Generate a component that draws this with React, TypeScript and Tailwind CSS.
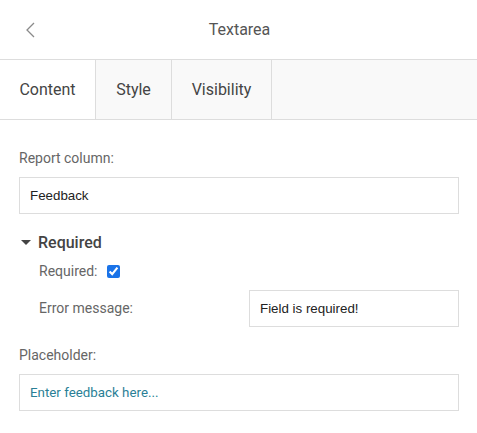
import { useState } from "react";

export default function App() {
  const [required, setRequired] = useState(true);
  const tabs = ["Content", "Style", "Visibility"];
  const tabWidths = ["w-[96px]", "w-[76px]", "w-[100px]"];

  return (
    <div className="w-[477px] h-[433px] bg-white font-['Roboto',sans-serif] text-[#444]">
      <header className="h-[59px] flex items-center relative">
        <button className="absolute left-[24px] top-[21px] text-[#888]">
          <svg width="14" height="18" viewBox="0 0 14 18" fill="none">
            <path d="M10 2 L3 9 L10 16" stroke="#8a8a8a" strokeWidth="1.3" />
          </svg>
        </button>
        <h1 className="w-full text-center text-[16px] text-[#555] pl-[2px]">Textarea</h1>
      </header>

      <nav className="flex h-[61px] border-y border-[#ddd] bg-[#f9f9f9]">
        {tabs.map((t, i) => (
          <div
            key={t}
            className={`${tabWidths[i]} flex items-center justify-center border-r border-[#ddd] text-[16px] text-[#444] ${
              i === 0 ? "bg-white" : ""
            }`}
          >
            {t}
          </div>
        ))}
      </nav>

      <div className="pl-[19px] pr-[18px] pt-[28px]">
        <label className="block text-[14px] text-[#666] leading-[20px]">Report column:</label>
        <div className="mt-[9px] h-[37px] border border-[#ddd] flex items-center px-[10px] text-[13.33px] text-[#222] font-['Liberation_Sans',sans-serif]">
          Feedback
        </div>

        <div className="mt-[18px] flex items-center gap-[7px] h-[22px]">
          <svg width="10" height="6" viewBox="0 0 10 6" className="ml-[2px]">
            <path d="M0 0 L10 0 L5 5 Z" fill="#444" />
          </svg>
          <span className="text-[16px] font-medium text-[#444]">Required</span>
        </div>

        <div className="pl-[20px]">
          <div className="mt-[7px] flex items-center h-[20px] text-[14px] text-[#666]">
            <span>Required:</span>
            <input
              type="checkbox"
              checked={required}
              onChange={(e) => setRequired(e.target.checked)}
              className="ml-[10px] w-[13px] h-[13px] accent-[#1a73e8]"
            />
          </div>

          <div className="mt-[9px] flex items-center justify-between">
            <span className="text-[14px] text-[#666]">Error message:</span>
            <div className="w-[210px] h-[37px] border border-[#ddd] flex items-center px-[10px] text-[13.33px] text-[#222] font-['Liberation_Sans',sans-serif]">
              Field is required!
            </div>
          </div>
        </div>

        <label className="block mt-[18px] text-[14px] text-[#666] leading-[20px]">Placeholder:</label>
        <div className="mt-[9px] h-[37px] border border-[#ddd] flex items-center px-[10px] text-[13.33px] text-[#2a7f96]">
          Enter feedback here...
        </div>
      </div>
    </div>
  );
}
